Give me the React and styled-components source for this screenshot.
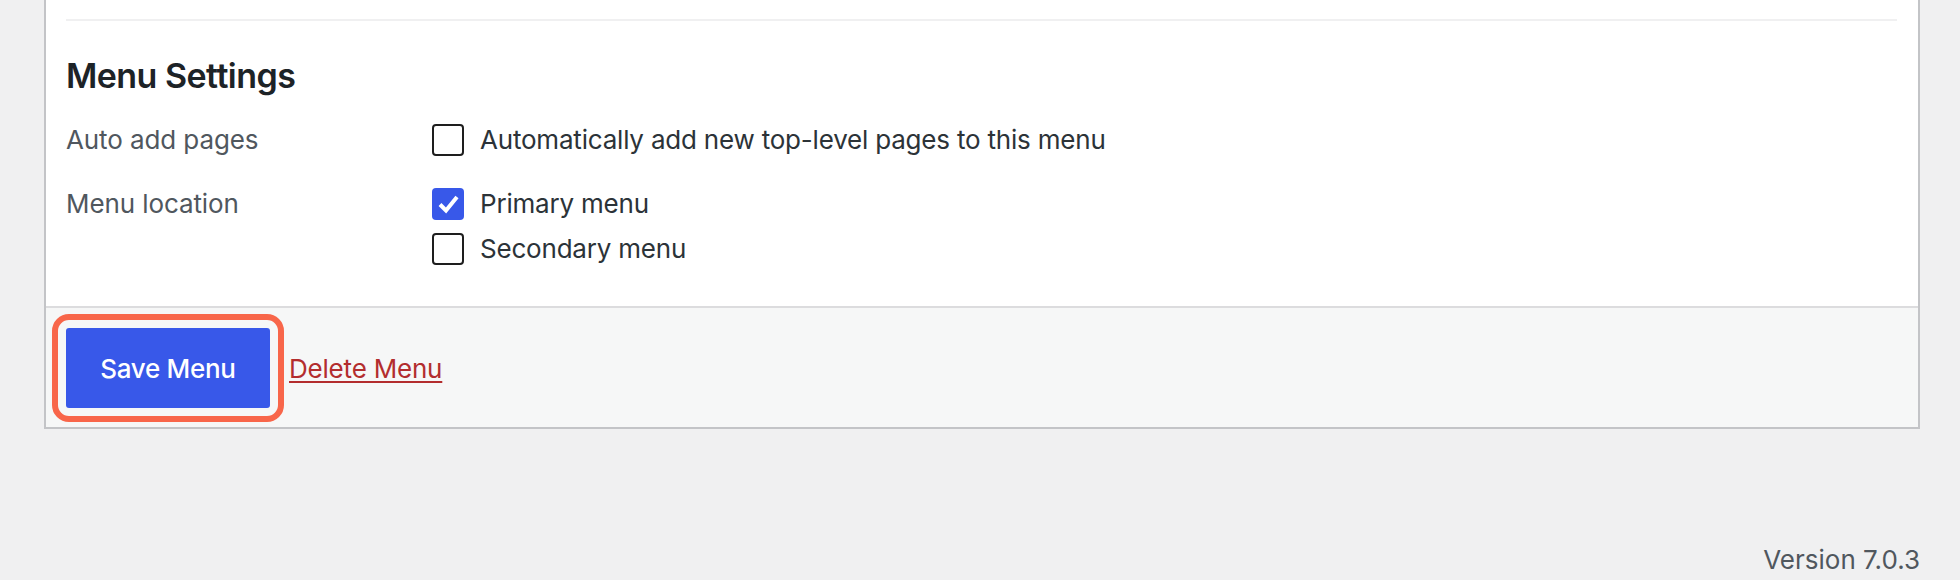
import React, { useState } from "react";
import styled, { createGlobalStyle } from "styled-components";

const GlobalStyle = createGlobalStyle`
  body {
    margin: 0;
    background: #f0f0f1;
    font-family: Inter, "Noto Sans", sans-serif;
    color: #1d2327;
  }
`;

const Page = styled.div`
  padding: 0 40px 0 44px;
`;

const Panel = styled.div`
  background: #fff;
  border: 2px solid #c3c4c7;
  border-top: none;
`;

const PanelBody = styled.div`
  padding: 19px 21px 41px 20px;
`;

const Divider = styled.hr`
  margin: 0;
  height: 2px;
  border: none;
  background: #f0f0f1;
`;

const Heading = styled.h3`
  margin: 35px 0 28px;
  font-size: 34px;
  line-height: 40px;
  font-weight: 600;
  color: #1d2327;
  letter-spacing: -0.55px;
`;

const SettingsTable = styled.div`
  display: flex;
  flex-direction: column;
  gap: 32px;
`;

const Row = styled.div`
  display: grid;
  grid-template-columns: 366px 1fr;
  align-items: start;
`;

const Label = styled.div`
  font-size: 26px;
  line-height: 32px;
  color: #50575e;
  letter-spacing: -0.1px;
`;

const Options = styled.div`
  display: flex;
  flex-direction: column;
  gap: 13px;
`;

const Option = styled.label`
  display: flex;
  align-items: center;
  gap: 16px;
  font-size: 26px;
  line-height: 32px;
  color: #2c3338;
  letter-spacing: -0.2px;
  cursor: pointer;
`;

const Box = styled.span`
  box-sizing: border-box;
  width: 32px;
  height: 32px;
  flex: none;
  border-radius: 4px;
  border: ${(p) => (p.$checked ? "none" : "2px solid #1e1e1e")};
  background: ${(p) => (p.$checked ? "#3858e9" : "#fff")};
  display: flex;
  align-items: center;
  justify-content: center;
`;

const Footer = styled.div`
  display: flex;
  align-items: center;
  padding: 20px 20px 19px;
  background: #f6f7f7;
  border-top: 2px solid #dcdcde;
`;

const SaveButton = styled.button`
  width: 204px;
  height: 80px;
  padding: 0;
  border: none;
  border-radius: 3px;
  background: #3858e9;
  color: #fff;
  font-family: Inter, "Noto Sans", sans-serif;
  font-size: 26px;
  font-weight: 500;
  letter-spacing: -0.3px;
  cursor: pointer;
  outline: 6px solid #f8664a;
  outline-offset: 8px;
`;

const DeleteLink = styled.a`
  margin-left: 19px;
  font-size: 26px;
  color: #b32d2e;
  letter-spacing: -0.2px;
  text-decoration: underline;
  text-underline-offset: 3px;
  text-decoration-thickness: 2px;
  cursor: pointer;
`;

const VersionBar = styled.div`
  padding: 115px 0 0;
  text-align: right;
  font-size: 26px;
  line-height: 32px;
  color: #50575e;
`;

const Checkbox = ({ checked, onToggle, children }) => (
  <Option onClick={onToggle}>
    <Box $checked={checked}>
      {checked && (
        <svg width="32" height="32" viewBox="0 0 32 32">
          <path
            d="M8 16.5 L14 22.5 L25 9"
            fill="none"
            stroke="#fff"
            strokeWidth="4"
          />
        </svg>
      )}
    </Box>
    {children}
  </Option>
);

const App = () => {
  const [autoAdd, setAutoAdd] = useState(false);
  const [locations, setLocations] = useState({ primary: true, secondary: false });

  const toggleLocation = (key) =>
    setLocations({ ...locations, [key]: !locations[key] });

  return (
    <Page>
      <GlobalStyle />
      <Panel>
        <PanelBody>
          <Divider />
          <Heading>Menu Settings</Heading>
          <SettingsTable>
            <Row>
              <Label>Auto add pages</Label>
              <Options>
                <Checkbox checked={autoAdd} onToggle={() => setAutoAdd(!autoAdd)}>
                  Automatically add new top-level pages to this menu
                </Checkbox>
              </Options>
            </Row>
            <Row>
              <Label>Menu location</Label>
              <Options>
                <Checkbox
                  checked={locations.primary}
                  onToggle={() => toggleLocation("primary")}
                >
                  Primary menu
                </Checkbox>
                <Checkbox
                  checked={locations.secondary}
                  onToggle={() => toggleLocation("secondary")}
                >
                  Secondary menu
                </Checkbox>
              </Options>
            </Row>
          </SettingsTable>
        </PanelBody>
        <Footer>
          <SaveButton>Save Menu</SaveButton>
          <DeleteLink>Delete Menu</DeleteLink>
        </Footer>
      </Panel>
      <VersionBar>Version 7.0.3</VersionBar>
    </Page>
  );
};

export default App;
